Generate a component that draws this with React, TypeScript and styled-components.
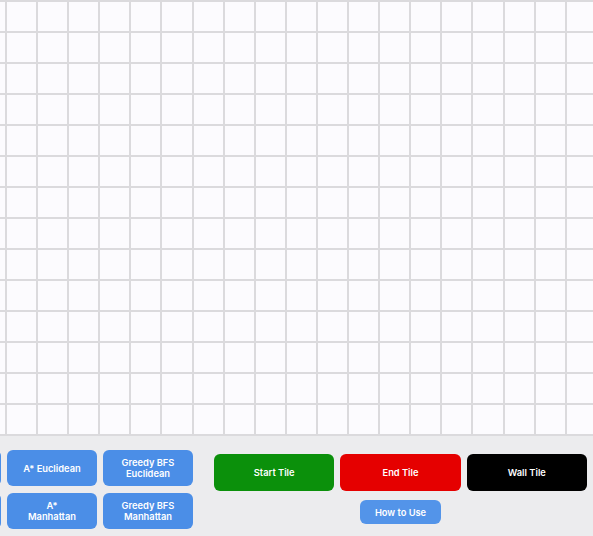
import React from "react";
import styled, { createGlobalStyle } from "styled-components";

const GlobalStyle = createGlobalStyle`
  html, body { margin: 0; padding: 0; }
  body {
    background: #ececee;
    font-family: Inter, "Noto Sans", "Liberation Sans", sans-serif;
    overflow: hidden;
  }
`;

const Page = styled.div`
  width: 593px;
  height: 536px;
  overflow: hidden;
  display: flex;
  flex-direction: column;
`;

const Board = styled.div`
  overflow: hidden;
  width: 100%;
  flex: none;
`;

const Cells = styled.div`
  display: grid;
  grid-template-columns: repeat(21, 29.1px);
  grid-auto-rows: 29px;
  gap: 2px;
  padding: 2px 0;
  margin-left: -24.1px;
  width: max-content;
  background: #dbdadd;
`;

const Cell = styled.div`
  background: #fcfbfe;
`;

const Panel = styled.div`
  flex: 1;
  display: flex;
  align-items: flex-start;
  gap: 21px;
  background: #ececee;
  overflow: hidden;
`;

const AlgoGrid = styled.div`
  display: grid;
  grid-template-columns: repeat(3, 90px);
  grid-auto-rows: 36px;
  gap: 7px 6px;
  margin-left: -89px;
  margin-top: 14px;
  flex: none;
`;

const BaseButton = styled.button`
  border: none;
  color: #ffffff;
  font-family: Inter, "Noto Sans", "Liberation Sans", sans-serif;
  font-size: 9.3px;
  font-weight: 600;
  line-height: 11px;
  text-align: center;
  padding: 0 6px;
  cursor: pointer;
  display: flex;
  align-items: center;
  justify-content: center;
`;

const AlgoButton = styled(BaseButton)`
  background: #4b8ee7;
  border-radius: 6px;
`;

const Controls = styled.div`
  width: 373px;
  margin-top: 18px;
  display: flex;
  flex-direction: column;
  align-items: center;
  flex: none;
`;

const TileRow = styled.div`
  display: flex;
  gap: 6px;
  width: 100%;
`;

const TileButton = styled(BaseButton)<{ $bg: string }>`
  flex: 1;
  height: 37px;
  border-radius: 6px;
  background: ${(p) => p.$bg};
`;

const HelpButton = styled(BaseButton)`
  width: 81px;
  height: 24px;
  margin-top: 9px;
  border-radius: 6px;
  background: #5394e9;
`;

const ROWS = 14;
const COLS = 21;

type Algo = { id: string; lines: string[] };

const algorithms: Algo[] = [
  { id: "hidden-1", lines: [] },
  { id: "astar-euclid", lines: ["A* Euclidean"] },
  { id: "greedy-euclid", lines: ["Greedy BFS", "Euclidean"] },
  { id: "hidden-2", lines: [] },
  { id: "astar-manhattan", lines: ["A*", "Manhattan"] },
  { id: "greedy-manhattan", lines: ["Greedy BFS", "Manhattan"] },
];

const tiles = [
  { label: "Start Tile", color: "#0b900b" },
  { label: "End Tile", color: "#e50000" },
  { label: "Wall Tile", color: "#000000" },
];

export default function App() {
  return (
    <>
      <GlobalStyle />
      <Page>
        <Board>
          <Cells>
            {Array.from({ length: ROWS * COLS }, (_, i) => (
              <Cell key={i} />
            ))}
          </Cells>
        </Board>
        <Panel>
          <AlgoGrid>
            {algorithms.map((a) => (
              <AlgoButton key={a.id} aria-label={a.lines.join(" ") || "algorithm"}>
                {a.lines.length > 0 && (
                  <span>
                    {a.lines.map((l, i) => (
                      <React.Fragment key={l}>
                        {i > 0 && <br />}
                        {l}
                      </React.Fragment>
                    ))}
                  </span>
                )}
              </AlgoButton>
            ))}
          </AlgoGrid>
          <Controls>
            <TileRow>
              {tiles.map((t) => (
                <TileButton key={t.label} $bg={t.color}>
                  {t.label}
                </TileButton>
              ))}
            </TileRow>
            <HelpButton>How to Use</HelpButton>
          </Controls>
        </Panel>
      </Page>
    </>
  );
}
